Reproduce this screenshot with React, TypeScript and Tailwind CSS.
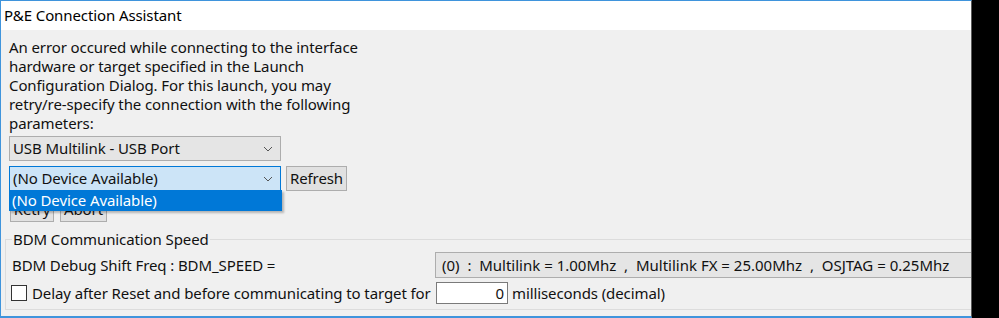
import React from "react";

const font = { fontFamily: '"Noto Sans", "Open Sans", sans-serif' };

function Chevron() {
  return (
    <svg width="10" height="6" viewBox="0 0 10 6" className="shrink-0">
      <path d="M1 1 L5 5 L9 1" fill="none" stroke="#555" strokeWidth="1" />
    </svg>
  );
}

function Combo({ text, focused }: { text: string; focused?: boolean }) {
  return (
    <div
      className={
        "flex h-[25px] w-[272px] items-center justify-between border pl-[3px] pr-[7px] " +
        (focused ? "border-[#0078d7] bg-[#cce4f7]" : "border-[#adadad] bg-[#e5e5e5]")
      }
    >
      <span>{text}</span>
      <Chevron />
    </div>
  );
}

function Btn({ label, w }: { label: string; w: string }) {
  return (
    <div className={"flex h-[25px] items-center justify-center border border-[#adadad] bg-[#e1e1e1] " + w}>
      {label}
    </div>
  );
}

export default function App() {
  return (
    <div
      className="flex h-[318px] w-[999px] bg-black text-[15px] leading-[19px] tracking-[-0.1px] text-[#111]"
      style={font}
    >
      <div className="flex h-[318px] w-[972px] flex-col overflow-hidden border-b-2 border-l border-r border-t border-b-[#3f94dc] border-l-[#3f94dc] border-r-[#5c5c5c] border-t-[#3f94dc]">
        <div className="flex h-[29px] items-center bg-white pl-[3px] text-black">P&amp;E Connection Assistant</div>

        <div className="flex-1 bg-[#f0f0f0] pl-[8px] pt-[8px]">
          <p className="w-[360px]">
            An error occured while connecting to the interface hardware or target specified in the Launch
            Configuration Dialog. For this launch, you may retry/re-specify the connection with the following
            parameters:
          </p>

          <div className="mt-[3px]">
            <Combo text="USB Multilink - USB Port" />
          </div>

          <div className="relative mt-[5px] flex items-center gap-[5px]">
            <Combo text="(No Device Available)" focused />
            <Btn label="Refresh" w="w-[61px]" />
            <div className="absolute left-0 top-[24px] z-10 flex h-[21px] w-[273px] items-center bg-[#0078d7] pl-[3px] text-white shadow-[2px_2px_2px_rgba(0,0,0,0.25)]">
              (No Device Available)
            </div>
          </div>

          <div className="mt-[6px] flex gap-[6px] pl-[1px]">
            <Btn label="Retry" w="w-[44px]" />
            <Btn label="Abort" w="w-[47px]" />
          </div>

          <fieldset className="ml-[-4px] mt-[8px] w-[1000px] border border-[#dcdcdc] pb-[5px] pl-[6px] pt-[3px]">
            <legend className="px-[1px]">BDM Communication Speed</legend>
            <div className="flex items-center">
              <span className="w-[423px]">BDM Debug Shift Freq : BDM_SPEED =</span>
              <div className="flex h-[26px] flex-1 items-center whitespace-pre border border-[#adadad] bg-[#e5e5e5] pl-[6px] tracking-[0px]">
                {"(0)  :  Multilink = 1.00Mhz  ,  Multilink FX = 25.00Mhz  ,  OSJTAG = 0.25Mhz"}
              </div>
            </div>
            <div className="mt-[4px] flex items-center">
              <div className="ml-[-1px] h-[16px] w-[16px] border border-[#333] bg-white" />
              <span className="ml-[5px] w-[404px] whitespace-nowrap">
                Delay after Reset and before communicating to target for
              </span>
              <div className="flex h-[22px] w-[72px] items-center justify-end border border-[#7a7a7a] bg-white pr-[3px]">
                0
              </div>
              <span className="ml-[4px]">milliseconds (decimal)</span>
            </div>
          </fieldset>
        </div>
      </div>
    </div>
  );
}
